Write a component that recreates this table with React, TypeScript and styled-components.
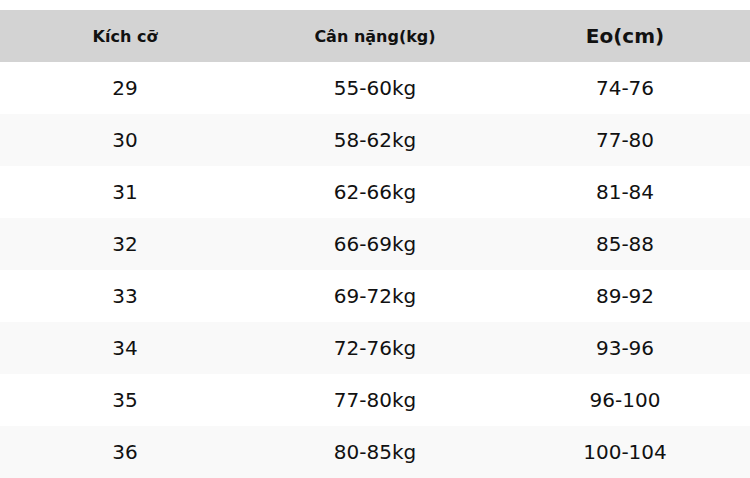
import * as React from "react";
import styled, { createGlobalStyle } from "styled-components";

interface ISizeRow {
  size: number;
  weight: string;
  waist: string;
}

const rows: ISizeRow[] = [
  { size: 29, weight: "55-60kg", waist: "74-76" },
  { size: 30, weight: "58-62kg", waist: "77-80" },
  { size: 31, weight: "62-66kg", waist: "81-84" },
  { size: 32, weight: "66-69kg", waist: "85-88" },
  { size: 33, weight: "69-72kg", waist: "89-92" },
  { size: 34, weight: "72-76kg", waist: "93-96" },
  { size: 35, weight: "77-80kg", waist: "96-100" },
  { size: 36, weight: "80-85kg", waist: "100-104" }
];

const GlobalStyle = createGlobalStyle`
  html, body {
    margin: 0;
    padding: 0;
    background: #fff;
    font-family: "DejaVu Sans", "Noto Sans", sans-serif;
    color: #111;
  }
`;

const Wrapper = styled.div`
  padding-top: 10px;
  width: 750px;
`;

const SizeTable = styled.table`
  width: 100%;
  border-collapse: collapse;
  table-layout: fixed;
`;

const HeadRow = styled.tr`
  background: #d3d3d3;
  height: 52px;
`;

const HeadCell = styled.th<{ $size: number }>`
  font-size: ${(p) => p.$size}px;
  font-weight: bold;
  text-align: center;
  padding: 0;
  color: #111;
`;

const BodyRow = styled.tr<{ $striped: boolean }>`
  height: 52px;
  background: ${(p) => (p.$striped ? "#f9f9f9" : "#fff")};
`;

const Cell = styled.td`
  font-size: 20px;
  text-align: center;
  padding: 0;
`;

export default function App() {
  return (
    <Wrapper>
      <GlobalStyle />
      <SizeTable>
        <thead>
          <HeadRow>
            <HeadCell $size={16}>Kích cỡ</HeadCell>
            <HeadCell $size={16}>Cân nặng(kg)</HeadCell>
            <HeadCell $size={20}>Eo(cm)</HeadCell>
          </HeadRow>
        </thead>
        <tbody>
          {rows.map((r, i) => (
            <BodyRow key={r.size} $striped={i % 2 === 1}>
              <Cell>{r.size}</Cell>
              <Cell>{r.weight}</Cell>
              <Cell>{r.waist}</Cell>
            </BodyRow>
          ))}
        </tbody>
      </SizeTable>
    </Wrapper>
  );
}
